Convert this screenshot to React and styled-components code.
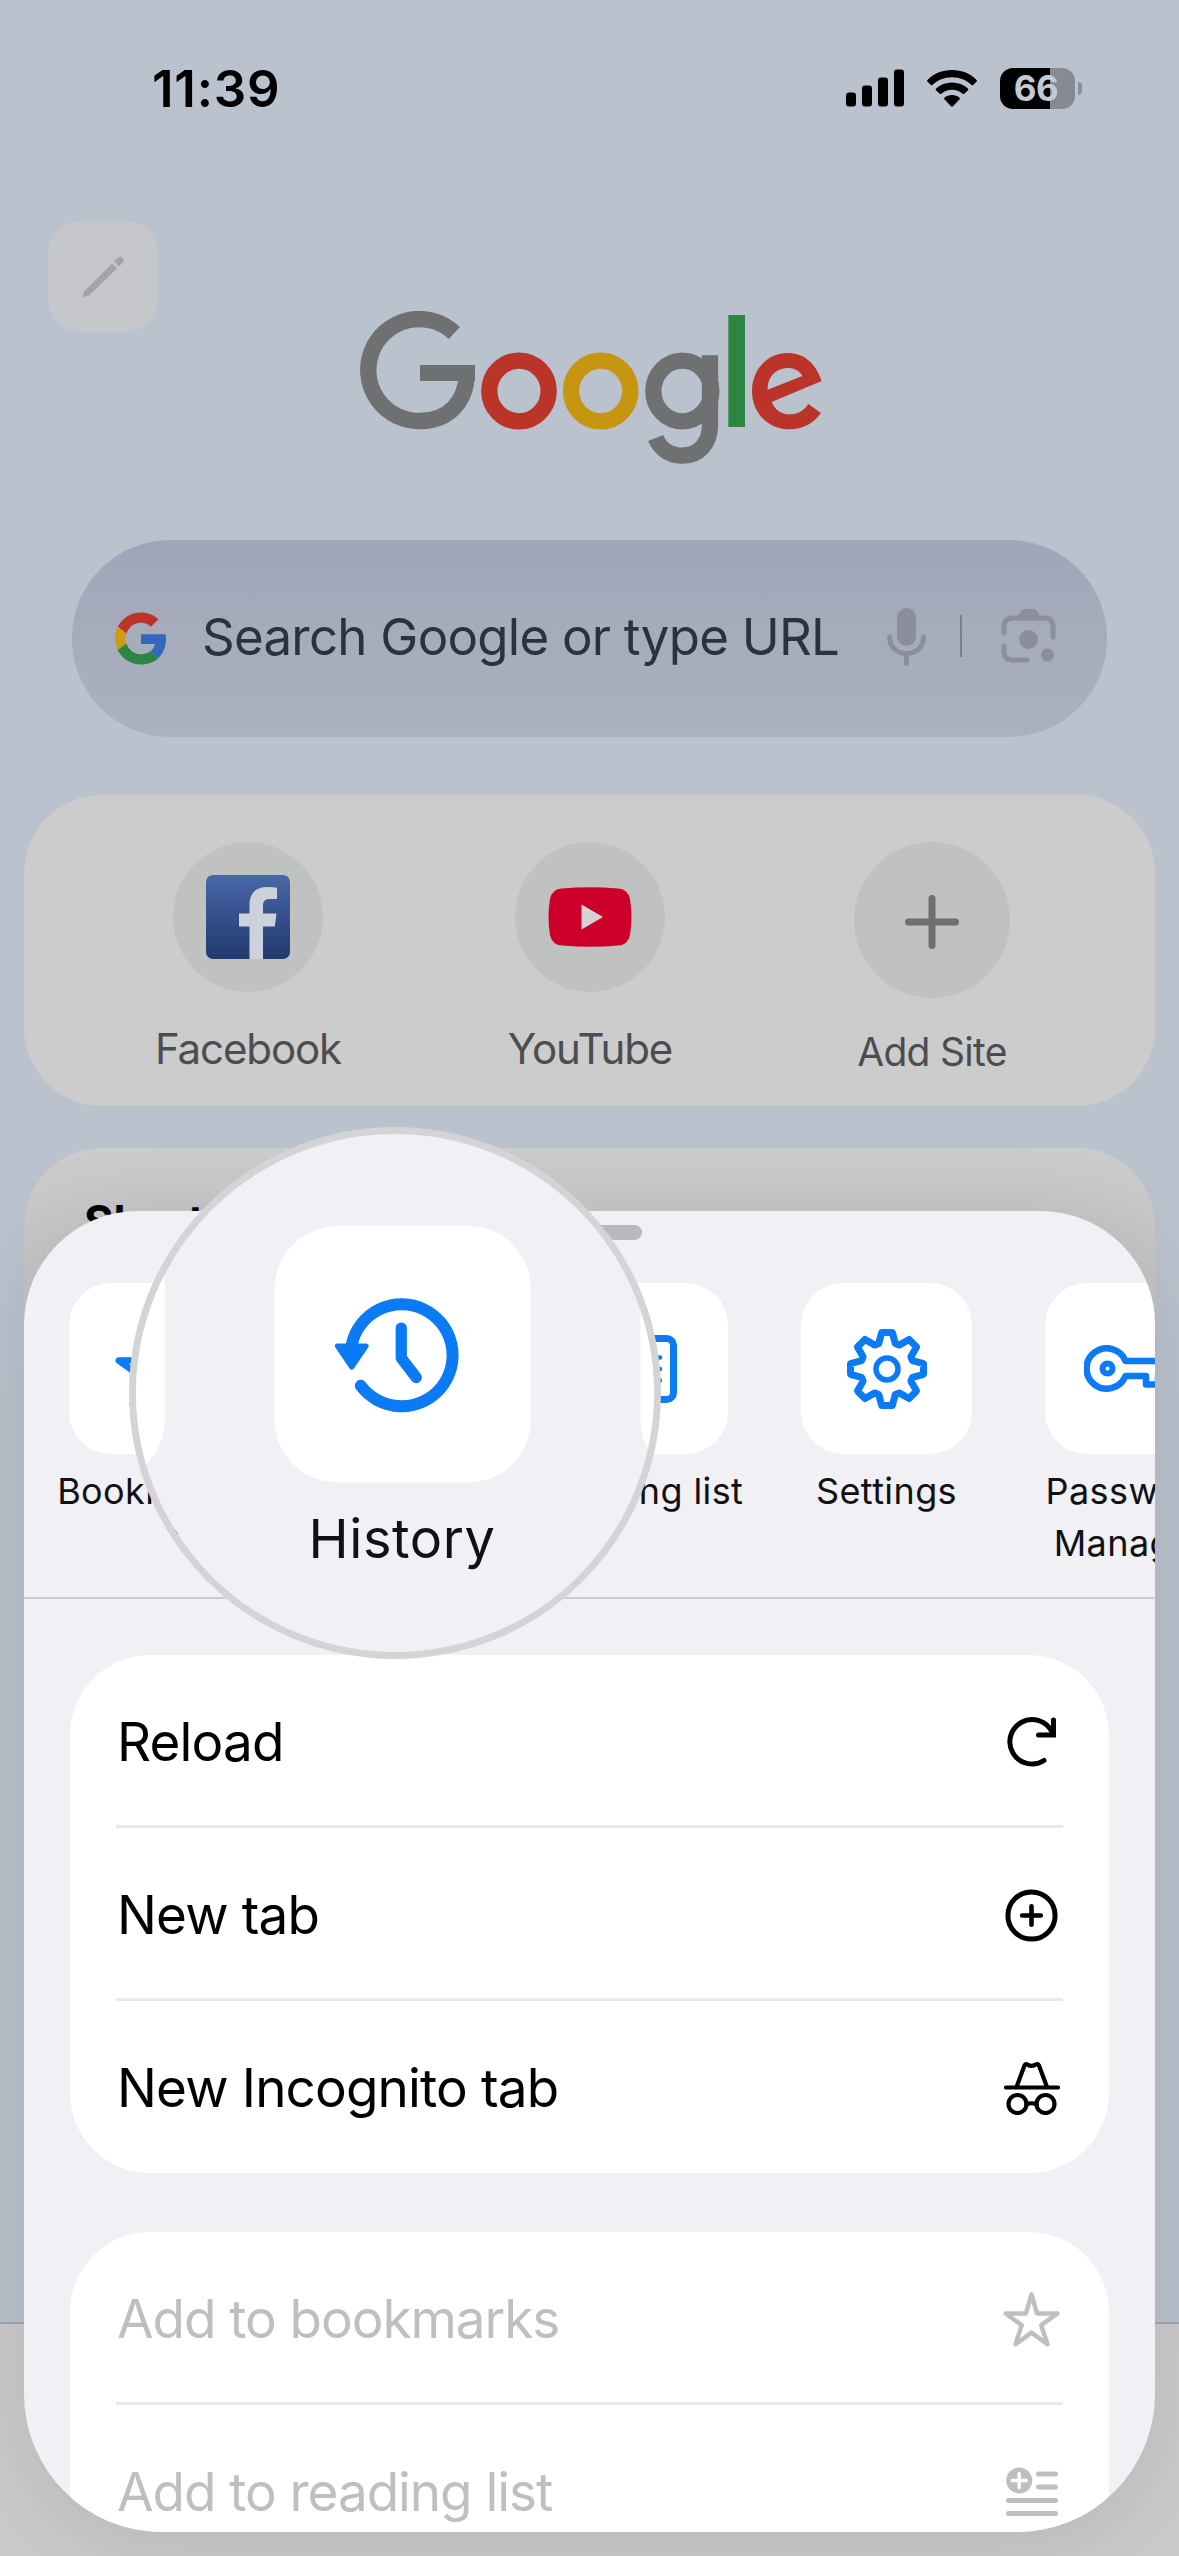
import React from "react";
import styled, { createGlobalStyle } from "styled-components";

const BLUE = "#0a7af5";

//Icons
const PencilIcon = () => (
  <svg width="43" height="43" viewBox="0 0 43 43" fill="#a3a4a6">
    <path d="M.500 42.500L2 36.500L30 8.500L35 13.500L7 40.500z" />
    <path d="M32 6.500L36 2.500Q38 .8 40 2.500L41 3.500Q42.500 5.500 41 7.500L37 11.500z" />
  </svg>
);

const GoogleWordmark = () => (
  <svg width="462" height="153" viewBox="60 62 1386 459" fill="none" strokeWidth="49">
    <path stroke="#6f7072" d="M343 128A153 153 0 1 0 240 392C325 392 380 334 380 248" />
    <path fill="#6f7072" d="M240 224h165v48H240z" />
    <ellipse cx="537" cy="302" rx="89" ry="91" stroke="#bb342a" />
    <ellipse cx="782" cy="302" rx="89" ry="91" stroke="#c69610" />
    <ellipse cx="1027" cy="302" rx="87" ry="91" stroke="#6f7072" />
    <path stroke="#6f7072" d="M1110 195V405C1110 460 1075 496 1028 496C990 496 960 475 947 443" />
    <path fill="#2e8543" d="M1165 74h50v336h-50z" />
    <path
      fill="#bb342a"
      fillRule="evenodd"
      d="M1445 272C1425 215 1390 188 1343 188C1282 188 1236 238 1236 302C1236 368 1284 417 1347 417C1390 417 1422 398 1443 368L1405 341C1391 362 1373 372 1348 372C1324 372 1305 359 1295 335ZM1283 298C1282 260 1308 233 1344 233C1364 233 1380 242 1387 257Z"
    />
  </svg>
);

const GoogleMark = () => (
  <svg width="52" height="53" viewBox="0 0 48 48">
    <path fill="#bb342a" d="M24 9.5c3.5 0 6.700 1.200 9.200 3.600l6.900-6.900C35.900 2.400 30.500 0 24 0 14.600 0 6.500 5.400 2.600 13.200l8 6.200C12.400 13.700 17.700 9.500 24 9.500z" />
    <path fill="#3567bd" d="M47 24.600c0-1.600-.2-3.100-.4-4.600H24v9h12.900c-.6 3-2.200 5.500-4.800 7.200l7.700 6C44.400 38 47 31.800 47 24.600z" />
    <path fill="#cf9c0e" d="M10.500 28.600c-.5-1.500-.8-3-.8-4.600s.3-3.100.8-4.600l-8-6.200C.9 16.500 0 20.100 0 24s.9 7.500 2.600 10.800z" />
    <path fill="#2e8543" d="M24 48c6.500 0 11.900-2.100 15.900-5.800l-7.700-6c-2.200 1.500-4.900 2.300-8.200 2.300-6.300 0-11.600-4.200-13.500-9.900l-8 6.200C6.500 42.600 14.600 48 24 48z" />
  </svg>
);

const MicIcon = () => (
  <svg width="39" height="59" viewBox="0 0 39 59" fill="none" stroke="#8b8f9c" strokeWidth="5">
    <rect x="10" y="1" width="19" height="38" rx="9.5" fill="#8b8f9c" stroke="none" />
    <path strokeLinecap="round" d="M2.600 30C2.600 40 10 46.500 19.500 46.500S36.400 40 36.400 30" />
    <path d="M19.500 46v12.500" />
  </svg>
);

const LensIcon = () => (
  <svg width="56" height="56" viewBox="0 0 56 56" fill="none" stroke="#8b8f9c" strokeWidth="5">
    <path strokeLinecap="round" d="M3 25V19Q3 10 12 10H43Q52 10 52 19V29" />
    <path strokeLinecap="round" d="M3 38V43Q3 52 12 52H26" />
    <path fill="#8b8f9c" stroke="none" d="M17 9Q20 1 24 1H33Q36 1 39 9z" />
    <circle cx="27.500" cy="31.500" r="9.500" fill="#8b8f9c" stroke="none" />
    <circle cx="46.500" cy="47" r="6.500" fill="#8b8f9c" stroke="none" />
  </svg>
);

const FacebookIcon = () => (
  <svg width="84" height="84" viewBox="0 0 84 84">
    <defs>
      <linearGradient id="fb" x1="0" y1="0" x2="0" y2="1">
        <stop offset="0" stopColor="#4767a8" />
        <stop offset="1" stopColor="#223a6e" />
      </linearGradient>
    </defs>
    <rect width="84" height="84" rx="7" fill="url(#fb)" />
    <path
      fill="#cdd1dc"
      d="M43.500 84V51.500H33V38.500H43.500V30C43.500 18 50 12 61 12Q67 12 71 12.800V24H64C58.500 24 57 26.500 57 31V38.500H70.500L68.800 51.500H57V84z"
    />
  </svg>
);

const YouTubeIcon = () => (
  <svg width="84" height="60" viewBox="0 0 84 60">
    <path fill="#cd0029" d="M14 1.500Q42-1 70 1.500Q80 2 82 12Q85 30 82 48Q80 58 70 58.500Q42 61 14 58.500Q4 58 2 48Q-1 30 2 12Q4 2 14 1.500z" />
    <path fill="#d6d3d4" d="M33.500 17.500V42.500L55 30z" />
  </svg>
);

const PlusIcon = () => (
  <svg width="54" height="54" viewBox="0 0 54 54" stroke="#6f6f6f" strokeWidth="7" strokeLinecap="round">
    <path d="M27 3.500v47M3.500 27h47" />
  </svg>
);

const SignalIcon = () => (
  <svg width="58" height="38" viewBox="0 0 58 38">
    <rect x="0" y="23.500" width="10" height="14" rx="3" />
    <rect x="16" y="16.500" width="10" height="21" rx="3" />
    <rect x="32" y="8.500" width="10" height="29" rx="3" />
    <rect x="48" y="0.500" width="10" height="37" rx="3" />
  </svg>
);

const WifiIcon = () => (
  <svg width="50" height="37" viewBox="0 0 50 37">
    <path d="M25 0C34.800 0 43.500 3.700 49.600 9.900Q50.300 10.700 49.600 11.500L46.200 14.900Q45.400 15.600 44.600 14.900C39.400 10 32.600 7.200 25 7.200S10.600 10 5.400 14.900Q4.600 15.600 3.800 14.900L.4 11.500Q-.3 10.700 .4 9.900C6.500 3.700 15.200 0 25 0z" />
    <path d="M25 12.500C31.200 12.500 36.700 14.700 41 18.600Q41.900 19.500 41 20.300L37.400 23.800Q36.600 24.500 35.800 23.800C32.900 21.300 29.200 19.700 25 19.700S17.100 21.300 14.200 23.800Q13.400 24.500 12.600 23.800L9 20.300Q8.100 19.500 9 18.600C13.300 14.700 18.800 12.500 25 12.500z" />
    <path d="M25 25C28 25 30.600 26 32.600 27.700Q33.400 28.500 32.600 29.300L26 36.200Q25 37 24 36.200L17.400 29.300Q16.600 28.500 17.400 27.700C19.400 26 22 25 25 25z" />
  </svg>
);

const STAR =
  "M28.300 2.700L34 22.300H55.100L38.300 34.300L44.700 54L28.300 42L11.900 54L18.300 34.300L1.800 22.300H22.600Z";

const StarIcon = ({ size = 57, color = "#bfbfbf", weight = 4.6 }) => (
  <svg width={size} height={size} viewBox="-1 0 58.600 57" fill="none" stroke={color} strokeWidth={weight} strokeLinejoin="round">
    <path d={STAR} />
  </svg>
);

const HistoryIcon = () => (
  <svg width="90" height="78" viewBox="0 0 90 78" fill="none" stroke={BLUE} strokeWidth="8" strokeLinecap="round" strokeLinejoin="round">
    <path d="M11.500 32A34 34 0 1 1 17.500 59.500" />
    <path d="M44.500 21V41L54.500 54" strokeWidth="7.500" />
    <path d="M2 33H21L11.500 47z" fill={BLUE} strokeWidth="3.500" />
  </svg>
);

const ListIcon = () => (
  <svg width="68" height="68" viewBox="0 0 68 68" fill="none" stroke={BLUE} strokeWidth="7" strokeLinecap="round">
    <rect x="3.500" y="3.500" width="61" height="61" rx="7" />
    <path strokeWidth="4.500" d="M18 22.500h33M18 34h33M18 45.500h33" />
  </svg>
);

// one tooth outline, repeated every 45 degrees
const tooth = [
  [-8.300, -25.500],
  [-5.300, -36.500],
  [5.300, -36.500],
  [8.300, -25.500],
];
const gearPoints = Array.from({ length: 8 }, (_, i) => {
  const a = (i * Math.PI) / 4;
  return tooth
    .map(([x, y]) => [
      (40 + x * Math.cos(a) - y * Math.sin(a)).toFixed(2),
      (40 + x * Math.sin(a) + y * Math.cos(a)).toFixed(2),
    ])
    .join(" ");
}).join(" ");

const GearIcon = () => (
  <svg width="80" height="80" viewBox="0 0 80 80" fill="none" stroke={BLUE} strokeWidth="7" strokeLinejoin="round">
    <polygon points={gearPoints} />
    <circle cx="40" cy="40" r="11" strokeWidth="5.500" />
  </svg>
);

const KeyIcon = () => (
  <svg width="94" height="48" viewBox="0 0 94 48" fill="none" stroke={BLUE} strokeWidth="6.500" strokeLinejoin="round">
    <path d="M41.500 16A20.200 20.200 0 1 0 41.500 31H62V39.500H74V31H80V39.500H90V16z" />
    <circle cx="23.500" cy="23.500" r="5" strokeWidth="6" />
  </svg>
);

const ReloadIcon = () => (
  <svg width="50" height="50" viewBox="0 0 50 50" fill="none" stroke="#000" strokeWidth="5" strokeLinecap="round">
    <path d="M37 43.500A22.200 22.200 0 1 1 45 15" />
    <path d="M46.500 3V18H31.500" />
  </svg>
);

const NewTabIcon = () => (
  <svg width="53" height="53" viewBox="0 0 53 53" fill="none" stroke="#000" strokeWidth="5" strokeLinecap="round">
    <circle cx="26.500" cy="26.500" r="23.600" />
    <path strokeWidth="4.600" d="M26.500 17.200v18.600M17.200 26.500h18.600" />
  </svg>
);

const IncognitoIcon = () => (
  <svg width="56" height="54" viewBox="0 0 56 54" fill="none" stroke="#000" strokeWidth="4.200" strokeLinecap="round" strokeLinejoin="round">
    <path d="M2 26.500h52M12.500 26L20.500 4.500Q21.500 2.600 23.500 3.600Q27.500 6 31.500 3.600Q34 2.600 35 4.500L43 26" />
    <circle cx="13.500" cy="43" r="9" />
    <circle cx="41.500" cy="43" r="9" />
    <path d="M22.500 43.500Q27.500 41 32.500 43.500" />
  </svg>
);

const AddReadingIcon = () => (
  <svg width="52" height="50" viewBox="0 0 52 50" fill="none" stroke="#bfbfbf" strokeWidth="5" strokeLinecap="round">
    <circle cx="13.200" cy="13.500" r="13" fill="#bfbfbf" stroke="none" />
    <path stroke="#fff" strokeWidth="3.400" d="M13.200 6.500v14M6.200 13.500h14" />
    <path d="M32.500 7h17M32.500 20h17M2.500 33.500h47M2.500 46.500h47" />
  </svg>
);

const quickActions = [
  { label: "Bookmarks", icon: <StarIcon size={80} color={BLUE} weight={4.800} /> },
  { label: "History", icon: <HistoryIcon /> },
  { label: "Reading list", icon: <ListIcon /> },
  { label: "Settings", icon: <GearIcon /> },
  { label: "Password Manager", icon: <KeyIcon /> },
];

const Quick = ({ label, icon }) => (
  <QuickItem>
    <QuickTile>{icon}</QuickTile>
    <QuickLabel>{label}</QuickLabel>
  </QuickItem>
);

const App = () => {
  return (
    <Screen>
      <GlobalStyle />
      <StatusBar>
        <Time>11:39</Time>
        <SignalIcon />
        <WifiIcon />
        <Battery>66</Battery>
        <Nub />
      </StatusBar>
      <Header>
        <EditButton>
          <PencilIcon />
        </EditButton>
        <GoogleWordmark />
      </Header>
      <SearchBar>
        <GoogleMark />
        <Placeholder>Search Google or type URL</Placeholder>
        <SearchTools>
          <MicIcon />
          <Separator />
          <LensIcon />
        </SearchTools>
      </SearchBar>
      <Sites>
        <Site>
          <SiteCircle>
            <FacebookIcon />
          </SiteCircle>
          <SiteName>Facebook</SiteName>
        </Site>
        <Site>
          <SiteCircle>
            <YouTubeIcon />
          </SiteCircle>
          <SiteName>YouTube</SiteName>
        </Site>
        <Site>
          <SiteCircle $add>
            <PlusIcon />
          </SiteCircle>
          <SiteName $small>Add Site</SiteName>
        </Site>
      </Sites>
      <Shortcuts>Shortcuts</Shortcuts>
      <BottomBar />

      <Sheet>
        <Grabber />
        <QuickStrip>
          {quickActions.map((action) => (
            <Quick key={action.label} {...action} />
          ))}
        </QuickStrip>
        <Group>
          <Row>
            <span>Reload</span>
            <IconSlot>
              <ReloadIcon />
            </IconSlot>
          </Row>
          <Row>
            <span>New tab</span>
            <IconSlot>
              <NewTabIcon />
            </IconSlot>
          </Row>
          <Row>
            <span>New Incognito tab</span>
            <IconSlot>
              <IncognitoIcon />
            </IconSlot>
          </Row>
        </Group>
        <Group>
          <Row $disabled>
            <span>Add to bookmarks</span>
            <IconSlot>
              <StarIcon />
            </IconSlot>
          </Row>
          <Row $disabled>
            <span>Add to reading list</span>
            <IconSlot>
              <AddReadingIcon />
            </IconSlot>
          </Row>
        </Group>
      </Sheet>

      <Magnifier>
        <MagnifiedStrip>
          {quickActions.slice(0, 3).map((action) => (
            <Quick key={action.label} {...action} />
          ))}
        </MagnifiedStrip>
      </Magnifier>
    </Screen>
  );
};

const GlobalStyle = createGlobalStyle`
  * {
    box-sizing: border-box;
  }
  body {
    margin: 0;
    font-family: Inter, "Liberation Sans", sans-serif;
  }
  svg {
    display: block;
    flex-shrink: 0;
  }
`;

const Screen = styled.div`
  position: relative;
  display: flex;
  flex-direction: column;
  width: 1179px;
  height: 2556px;
  overflow: hidden;
  background: #bac2cd;
`;

//Status bar
const StatusBar = styled.div`
  display: flex;
  align-items: center;
  height: 176px;
  padding-left: 152px;
  svg {
    margin-right: 23px;
  }
`;
const Time = styled.div`
  width: 694px;
  font-size: 51px;
  font-weight: 600;
  letter-spacing: 0.8px;
`;
const Battery = styled.div`
  width: 75px;
  height: 41px;
  padding-right: 3px;
  border-radius: 13px;
  background: linear-gradient(90deg, #000 50px, #878994 50px);
  color: #c3cad4;
  font-size: 35px;
  font-weight: 700;
  line-height: 41px;
  letter-spacing: -0.5px;
  text-align: center;
`;
const Nub = styled.div`
  width: 4px;
  height: 13px;
  margin-left: 3px;
  border-radius: 0 4px 4px 0;
  background: #8d909b;
`;

//New tab page
const Header = styled.div`
  display: flex;
  align-items: flex-start;
  height: 319px;
  padding: 45px 0 0 48px;
  > svg {
    margin: 90px 0 0 202px;
  }
`;
const EditButton = styled.div`
  display: flex;
  align-items: center;
  justify-content: center;
  width: 110px;
  height: 111px;
  border-radius: 32px;
  background: #c6c7ca;
`;
const SearchBar = styled.div`
  display: flex;
  align-items: center;
  width: 1035px;
  height: 197px;
  margin: 45px 0 0 72px;
  padding-left: 43px;
  border-radius: 98px;
  background: linear-gradient(#9da6ba, #a5abbb 40%, #acb1be);
`;
const Placeholder = styled.div`
  width: 720px;
  padding: 0 0 4px 35px;
  color: #2b323c;
  font-size: 51px;
  letter-spacing: -0.75px;
  white-space: nowrap;
`;
const SearchTools = styled.div`
  display: flex;
  align-items: center;
  padding-bottom: 5px;
`;
const Separator = styled.div`
  width: 2px;
  height: 42px;
  margin: 0 39px 0 34px;
  background: #7a7f8d;
`;
const Sites = styled.div`
  display: flex;
  flex-shrink: 0;
  width: 1131px;
  height: 311px;
  margin: 58px 0 0 24px;
  padding: 47px 0 0 53px;
  border-radius: 78px;
  background: #cccccc;
`;
const Site = styled.div`
  display: flex;
  flex-direction: column;
  align-items: center;
  width: 342px;
`;
const SiteCircle = styled.div`
  display: flex;
  align-items: center;
  justify-content: center;
  width: ${({ $add }) => ($add ? 156 : 150)}px;
  height: ${({ $add }) => ($add ? 156 : 150)}px;
  margin-bottom: ${({ $add }) => ($add ? 29 : 32)}px;
  padding-top: ${({ $add }) => ($add ? 4 : 0)}px;
  border-radius: 50%;
  background: ${({ $add }) => ($add ? "#c1c1c1" : "#bfc2c1")};
`;
const SiteName = styled.div`
  color: #4c4d50;
  font-size: ${({ $small }) => ($small ? 39 : 42)}px;
  line-height: 50px;
  letter-spacing: ${({ $small }) => ($small ? -0.7 : -1.1)}px;
`;
const Shortcuts = styled.div`
  flex-shrink: 0;
  width: 1131px;
  height: 1174px;
  margin: 42px 0 0 24px;
  padding: 46px 60px;
  border-radius: 78px 78px 0 0;
  background: linear-gradient(#cccccc, #c5c5c5 110px);
  font-size: 45px;
  font-weight: 700;
  clip-path: inset(0 0 700px 0);
`;
const BottomBar = styled.div`
  flex-shrink: 0;
  height: 234px;
  border-top: 2px solid #a3a5ac;
  background: #cacaca;
`;

//Menu sheet
const Sheet = styled.div`
  position: absolute;
  left: 24px;
  top: 1211px;
  width: 1131px;
  height: 1321px;
  overflow: hidden;
  border-radius: 114px 114px 138px 138px;
  background: #f0f0f5;
  box-shadow: 0 10px 90px rgba(0, 0, 0, 0.1);
`;
const Grabber = styled.div`
  width: 105px;
  height: 15px;
  margin: 14px auto 0;
  border-radius: 8px;
  background: #b9b8be;
`;
const QuickStrip = styled.div`
  display: flex;
  height: 359px;
  margin-bottom: 56px;
  padding: 43px 0 0 8.5px;
  border-bottom: 2px solid #cdcdd1;
  overflow: hidden;
`;
const QuickItem = styled.div`
  display: flex;
  flex-direction: column;
  flex-shrink: 0;
  align-items: center;
  width: 244px;
`;
const QuickTile = styled.div`
  display: flex;
  align-items: center;
  justify-content: center;
  width: 171px;
  height: 171px;
  margin-bottom: 11px;
  border-radius: 42px;
  background: #fff;
`;
const QuickLabel = styled.div`
  max-width: 212px;
  color: #111114;
  font-size: 36px;
  line-height: 52px;
  letter-spacing: 0.4px;
  text-align: center;
`;
const Group = styled.div`
  width: 1039px;
  margin: 0 0 59px 46px;
  border-radius: 80px;
  background: #fff;
`;
const Row = styled.div`
  display: flex;
  align-items: center;
  justify-content: space-between;
  height: 173px;
  margin: 0 46px;
  padding: 4px 3px 0 1px;
  border-bottom: 3px solid #e9e9ea;
  color: ${({ $disabled }) => ($disabled ? "#bfbfbf" : "#000")};
  font-size: 53px;
  letter-spacing: ${({ $disabled }) => ($disabled ? -1.05 : -0.85)}px;
  &:last-child {
    height: 172px;
    padding-top: 2px;
    border-bottom: none;
  }
`;
const IconSlot = styled.div`
  display: flex;
  justify-content: center;
  width: 57px;
`;

//Round magnifier over the History button
const Magnifier = styled.div`
  position: absolute;
  left: 129px;
  top: 1127px;
  width: 532px;
  height: 532px;
  overflow: hidden;
  padding-top: 92px;
  border: 7px solid #d4d4d6;
  border-radius: 50%;
  background: #f0f0f5;
`;
const MagnifiedStrip = styled.div`
  display: flex;
  justify-content: center;
  transform: translateX(7px) scale(1.5);
  transform-origin: top center;
`;

export default App;
